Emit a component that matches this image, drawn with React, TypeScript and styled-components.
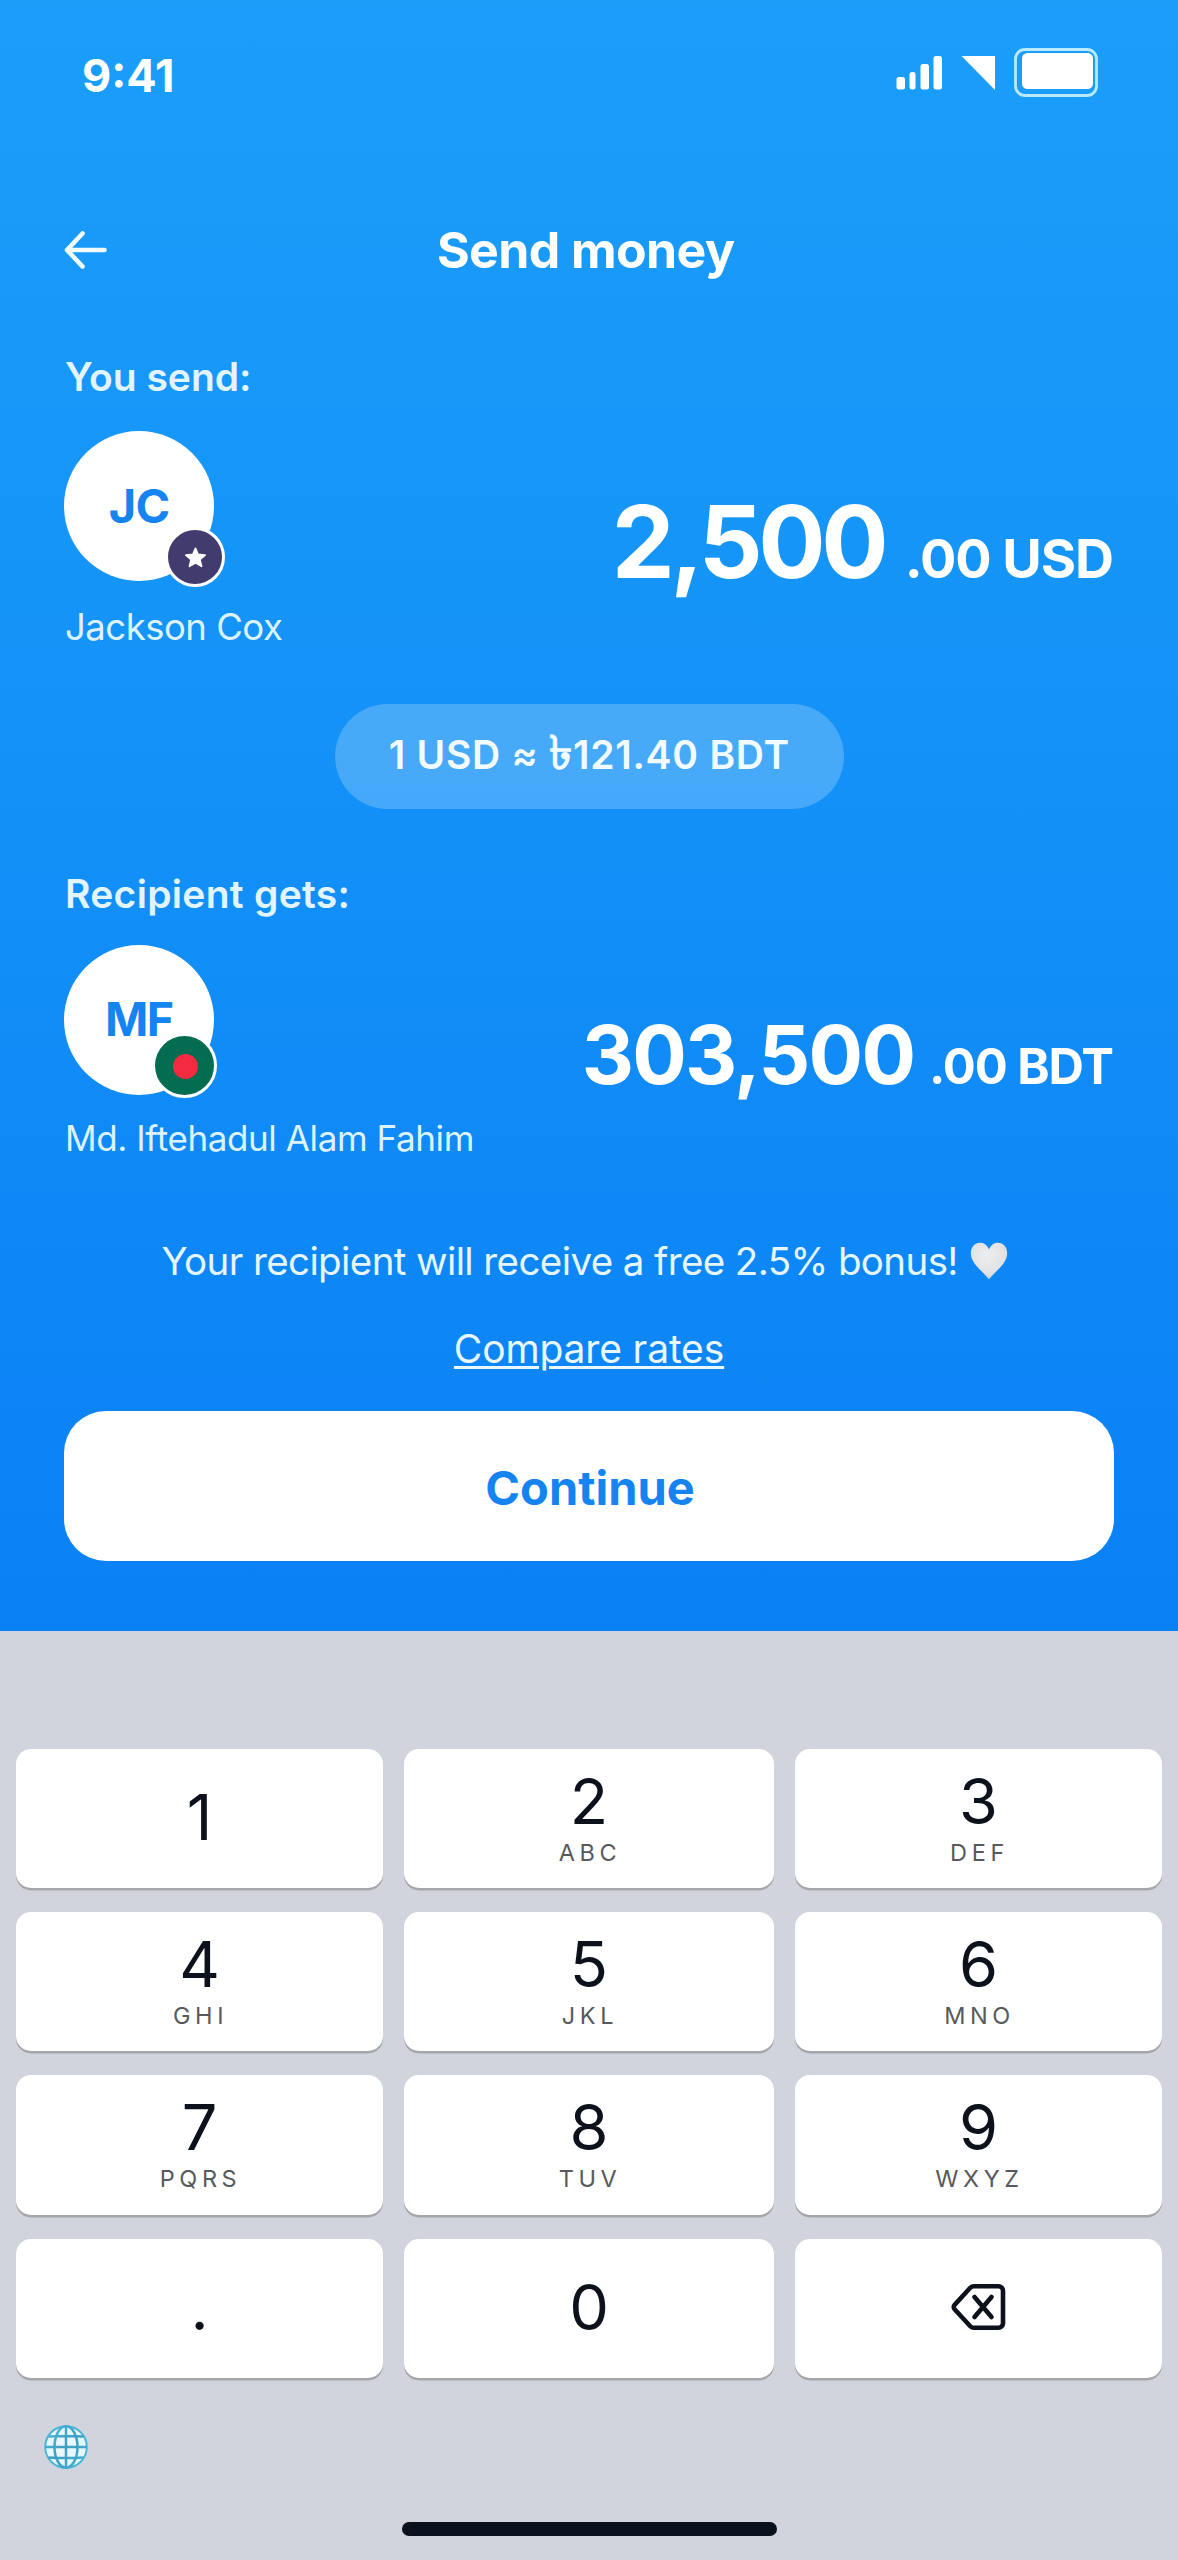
import React from "react";
import styled, { createGlobalStyle } from "styled-components";

const GlobalStyle = createGlobalStyle`
  * { box-sizing: border-box; }
  html, body { margin: 0; padding: 0; }
  body { font-family: Inter, "Noto Sans", "Liberation Sans", sans-serif; background: #d1d4dd; }
  button { font: inherit; border: 0; padding: 0; margin: 0; }
`;

const Screen = styled.main`
  display: flex;
  flex-direction: column;
  width: 1178px;
  height: 2560px;
  overflow: hidden;
  background: #d1d4dd;
`;

const Hero = styled.section`
  display: flex;
  flex-direction: column;
  height: 1631px;
  padding: 0 64px;
  color: #fff;
  background: linear-gradient(180deg, #1b9efa 0%, #1492f8 45%, #0a80f5 100%);
`;

interface TextProps {
  $size: number;
  $weight?: number;
  $spacing?: number;
  $color?: string;
}

const Text = styled.span<TextProps>`
  display: block;
  white-space: nowrap;
  line-height: 1;
  font-size: ${(p) => p.$size}px;
  font-weight: ${(p) => p.$weight ?? 400};
  letter-spacing: ${(p) => p.$spacing ?? 0}px;
  margin-right: ${(p) => -(p.$spacing ?? 0)}px;
  color: ${(p) => p.$color ?? "inherit"};
`;

const Taka = styled.span`
  font-size: 47px;
  line-height: 0;
  -webkit-text-stroke: 1.4px currentColor;
`;

const StatusBar = styled.header`
  display: flex;
  align-items: center;
  justify-content: space-between;
  height: 60px;
  margin-top: 45px;
  padding: 0 16px 0 18px;
`;

const StatusIcons = styled.div`
  display: flex;
  align-items: center;
  height: 55px;
  margin-bottom: 5px;
`;

const NavBar = styled.nav`
  display: grid;
  grid-template-columns: 60px 1fr 66px;
  align-items: center;
  justify-items: center;
  height: 60px;
  margin-top: 115px;
`;

const BackButton = styled.button`
  display: flex;
  justify-self: start;
  background: none;
  color: inherit;
`;

const Label = styled.div<{ $top: number }>`
  display: flex;
  align-items: center;
  height: 40px;
  margin-top: ${(p) => p.$top}px;
  padding: 0 0 2px 1px;
  color: #e2f5ff;
`;

const PartyRow = styled.div<{ $top: number }>`
  display: flex;
  justify-content: space-between;
  height: 150px;
  margin-top: ${(p) => p.$top}px;
`;

const Avatar = styled.div`
  position: relative;
  display: flex;
  align-items: center;
  justify-content: center;
  width: 150px;
  height: 150px;
  padding: 0 0 1px 1px;
  border-radius: 50%;
  background: #fff;
  color: #1583f0;
`;

const Badge = styled.div<{ $size: number; $right: number; $bottom: number; $color: string }>`
  position: absolute;
  right: ${(p) => p.$right}px;
  bottom: ${(p) => p.$bottom}px;
  display: flex;
  align-items: center;
  justify-content: center;
  width: ${(p) => p.$size}px;
  height: ${(p) => p.$size}px;
  border: 3px solid #fff;
  border-radius: 50%;
  background: ${(p) => p.$color};
`;

const FlagDisc = styled.span`
  width: 25px;
  height: 25px;
  margin: 2px 0 0 2px;
  border-radius: 50%;
  background: #f42a41;
`;

const Amount = styled.div<{ $top: number; $gap: number }>`
  display: flex;
  align-items: baseline;
  gap: ${(p) => p.$gap}px;
  padding-top: ${(p) => p.$top}px;
`;

const PersonName = styled.div<{ $top: number }>`
  display: flex;
  align-items: center;
  height: 40px;
  margin-top: ${(p) => p.$top}px;
  padding: 0 0 1px 1px;
  color: #dcf3ff;
`;

const RatePill = styled.div`
  display: flex;
  align-items: center;
  justify-content: center;
  align-self: center;
  width: 509px;
  height: 105px;
  margin-top: 56px;
  padding-bottom: 4px;
  border-radius: 53px;
  background: rgba(255, 255, 255, 0.22);
  color: #f2fbff;
`;

const Bonus = styled.div`
  display: flex;
  align-items: center;
  justify-content: center;
  gap: 12px;
  height: 40px;
  margin-top: 82px;
  padding-right: 8px;
  color: #e6f6ff;
`;

const CompareLink = styled.a`
  align-self: center;
  display: block;
  height: 40px;
  margin-top: 48px;
  line-height: 40px;
  font-size: 39px;
  letter-spacing: -0.15px;
  white-space: nowrap;
  color: #e9f8ff;
  text-decoration: underline;
  text-decoration-thickness: 3px;
  text-underline-offset: 3px;
`;

const ContinueButton = styled.button`
  display: flex;
  align-items: center;
  justify-content: center;
  height: 150px;
  margin-top: 42px;
  padding: 3px 0 0 2px;
  border-radius: 42px;
  background: #fff;
  color: #1583f0;
`;

const Keyboard = styled.section`
  display: flex;
  flex-direction: column;
  height: 929px;
  padding: 117.5px 16px 0;
`;

const Keys = styled.div`
  display: grid;
  grid-template-columns: 367px 369.5px 367px;
  grid-auto-rows: 139.4px;
  gap: 24px 21.25px;
`;

const Key = styled.button<{ $stacked: boolean }>`
  display: flex;
  flex-direction: column;
  align-items: center;
  justify-content: ${(p) => (p.$stacked ? "flex-start" : "center")};
  gap: 8px;
  padding-top: ${(p) => (p.$stacked ? 21 : 0)}px;
  padding-bottom: ${(p) => (p.$stacked ? 0 : 2)}px;
  border-radius: 15px;
  background: #fff;
  box-shadow: 0 2.5px 0 #a4a6aa;
  color: #0d111b;
`;

const KeyLetters = styled.span`
  display: block;
  font-size: 23.5px;
  line-height: 24px;
  letter-spacing: 4.6px;
  margin-right: -2px;
  color: #58595c;
`;

const KeyboardFooter = styled.footer`
  display: flex;
  flex-direction: column;
  padding: 47px 28px 0;
`;

const HomeIndicator = styled.div`
  align-self: center;
  width: 375px;
  height: 14px;
  margin-top: 53px;
  border-radius: 7px;
  background: #0a111c;
`;

const SignalIcon = () => (
  <svg width="46" height="34" viewBox="0 0 46 34" fill="#fff">
    <rect x="0.5" y="21" width="8.5" height="12.5" rx="2.5" />
    <rect x="13.5" y="16" width="6" height="17.5" rx="2.5" />
    <rect x="24.5" y="8" width="8.5" height="25.5" rx="2.5" />
    <rect x="37.5" y="0" width="8.5" height="33.5" rx="2.5" />
  </svg>
);

const WedgeIcon = () => (
  <svg width="35" height="34" viewBox="0 0 35 34" fill="#fff">
    <path d="M0.5 0H34v34z" />
  </svg>
);

const BatteryIcon = () => (
  <svg width="84" height="49" viewBox="0 0 84 49">
    <rect x="1.5" y="1.5" width="81" height="46" rx="9.5" fill="none" stroke="#b9eaff" strokeWidth="2.8" />
    <rect x="8" y="5" width="71" height="36" rx="5.5" fill="#fff" />
  </svg>
);

const Spacer = styled.span<{ $w: number }>`
  width: ${(p) => p.$w}px;
`;

const ArrowIcon = () => (
  <svg width="44" height="38" viewBox="0 0 44 38" fill="none" stroke="#f2fbff" strokeWidth="4.6" strokeLinecap="round" strokeLinejoin="round">
    <path d="M40.500 19H3M18.500 2.500L3 19l15.500 16.500" />
  </svg>
);

const StarIcon = () => (
  <svg width="24" height="24" viewBox="0 0 24 24" fill="#fff" stroke="#fff" strokeWidth="1.8" strokeLinejoin="round">
    <path d="M12.500 3.400l2.600 6.100 7 .6-5.300 4.400 1.700 6.800-6-3.600-6 3.600 1.700-6.800-5.300-4.400 7-.6z" />
  </svg>
);

const HeartIcon = () => (
  <svg width="38" height="38" viewBox="0 0 38 38">
    <defs>
      <radialGradient id="heart" cx="0.45" cy="0.35" r="0.75">
        <stop offset="0" stopColor="#ededef" />
        <stop offset="0.6" stopColor="#e3e3e5" />
        <stop offset="1" stopColor="#cfd0d4" />
      </radialGradient>
    </defs>
    <path
      d="M19 7.500C17 2.600 13.500.7 10 .7 4.600.7.800 5 .8 11.200.8 21.500 12.500 29 19 37.300 25.500 29 37.200 21.500 37.200 11.200 37.200 5 33.400.7 28 .7c-3.500 0-7 1.900-9 6.800z"
      fill="url(#heart)"
    />
  </svg>
);

const BackspaceIcon = () => (
  <svg width="55" height="48" viewBox="0 0 55 48" fill="none" stroke="#0d111b" strokeWidth="4.6" strokeLinecap="round" strokeLinejoin="round">
    <path d="M23 3.200h24.500a4.500 4.500 0 0 1 4.500 4.500v32.600a4.500 4.500 0 0 1-4.500 4.500H23a5 5 0 0 1-3.700-1.600L3.600 26.200a3.200 3.200 0 0 1 0-4.400L19.300 4.800A5 5 0 0 1 23 3.200z" />
    <path d="M23.500 14l17 20M40.500 14l-17 20" />
  </svg>
);

const GlobeIcon = () => (
  <svg width="44" height="44" viewBox="0 0 44 44" fill="none">
    <defs>
      <linearGradient id="globeLine" gradientUnits="userSpaceOnUse" x1="0" y1="0" x2="44" y2="44">
        <stop offset="0" stopColor="#4ec0de" />
        <stop offset="0.5" stopColor="#3d9dc0" />
        <stop offset="1" stopColor="#4cb4d8" />
      </linearGradient>
      <radialGradient id="globeFill" cx="0.5" cy="0.45" r="0.6">
        <stop offset="0" stopColor="#eef5ff" />
        <stop offset="1" stopColor="#dff8ff" />
      </radialGradient>
    </defs>
    <circle cx="22" cy="22" r="20.800" fill="url(#globeFill)" stroke="#48b4d6" strokeWidth="1.900" />
    <g stroke="url(#globeLine)" strokeWidth="2.500">
      <ellipse cx="22" cy="22" rx="11.500" ry="20.800" />
      <path d="M22 1.200V42.800M1.200 22H42.800M4.500 11.600Q22 10.600 39.500 11.600M4.500 32.400Q22 33.400 39.500 32.400" />
    </g>
  </svg>
);

const keys = [
  { digit: "1" },
  { digit: "2", letters: "ABC" },
  { digit: "3", letters: "DEF" },
  { digit: "4", letters: "GHI" },
  { digit: "5", letters: "JKL" },
  { digit: "6", letters: "MNO" },
  { digit: "7", letters: "PQRS" },
  { digit: "8", letters: "TUV" },
  { digit: "9", letters: "WXYZ" },
  { digit: "." },
  { digit: "0" },
  { digit: "" },
];

export default function App() {
  return (
    <Screen>
      <GlobalStyle />
      <Hero>
        <StatusBar>
          <Text $size={45} $weight={650}>9:41</Text>
          <StatusIcons>
            <SignalIcon />
            <Spacer $w={19} />
            <WedgeIcon />
            <Spacer $w={18} />
            <BatteryIcon />
          </StatusIcons>
        </StatusBar>
        <NavBar>
          <BackButton aria-label="Back"><ArrowIcon /></BackButton>
          <Text $size={50} $weight={680} $spacing={-0.6}>Send money</Text>
        </NavBar>

        <Label $top={77}><Text $size={39} $weight={580}>You send:</Text></Label>
        <PartyRow $top={34}>
          <Avatar>
            <Text $size={47} $weight={680} $spacing={-0.5}>JC</Text>
            <Badge $size={60} $right={-11} $bottom={-6} $color="#423c6e"><StarIcon /></Badge>
          </Avatar>
          <Amount $top={61} $gap={16}>
            <Text $size={100} $weight={680} $spacing={-4.4}>2,500</Text>
            <Text $size={54} $weight={680} $spacing={-1.1}>.00 USD</Text>
          </Amount>
        </PartyRow>
        <PersonName $top={27}><Text $size={36.5} $spacing={-0.5}>Jackson Cox</Text></PersonName>

        <RatePill>
          <Text $size={39} $weight={580} $spacing={0.75}>1 USD ≈ <Taka>৳</Taka>121.40 BDT</Text>
        </RatePill>

        <Label $top={65}><Text $size={39} $weight={580} $spacing={0.3}>Recipient gets:</Text></Label>
        <PartyRow $top={31}>
          <Avatar>
            <Text $size={46.5} $weight={650} $spacing={-1.5}>MF</Text>
            <Badge $size={65} $right={-3} $bottom={-3} $color="#046c50"><FlagDisc /></Badge>
          </Avatar>
          <Amount $top={69.5} $gap={13}>
            <Text $size={81} $weight={680} $spacing={-1.8}>303,500</Text>
            <Text $size={49} $weight={680} $spacing={-1.1}>.00 BDT</Text>
          </Amount>
        </PartyRow>
        <PersonName $top={24}><Text $size={35} $spacing={-0.4}>Md. Iftehadul Alam Fahim</Text></PersonName>

        <Bonus>
          <Text $size={38.5} $spacing={-0.6}>Your recipient will receive a free 2.5% bonus!</Text>
          <HeartIcon />
        </Bonus>
        <CompareLink>Compare rates</CompareLink>
        <ContinueButton><Text $size={47} $weight={680}>Continue</Text></ContinueButton>
      </Hero>

      <Keyboard>
        <Keys>
          {keys.map((k, i) => (
            <Key key={i} $stacked={!!k.letters} aria-label={k.digit || "Delete"}>
              {k.digit ? <Text $size={63}>{k.digit}</Text> : <BackspaceIcon />}
              {k.letters && <KeyLetters>{k.letters}</KeyLetters>}
            </Key>
          ))}
        </Keys>
        <KeyboardFooter>
          <GlobeIcon />
          <HomeIndicator />
        </KeyboardFooter>
      </Keyboard>
    </Screen>
  );
}
